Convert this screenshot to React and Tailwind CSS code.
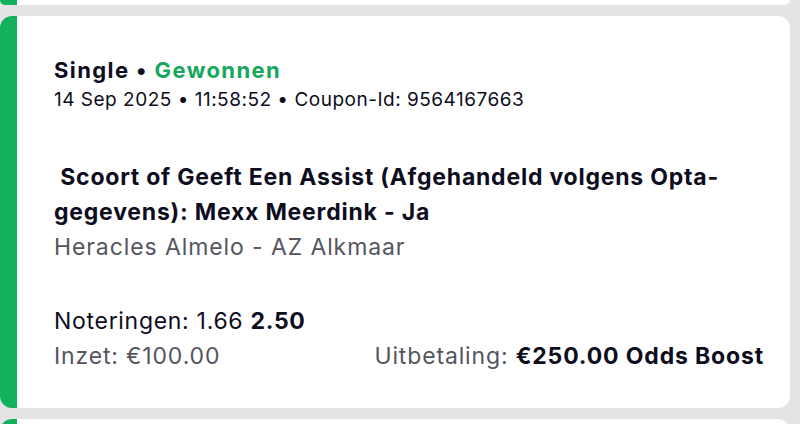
export default function App () {
  return (
    <div className="h-[424px] w-[800px] overflow-hidden bg-[#e4e4e7] flex flex-col gap-[11px] pr-[10px]" style={{ fontFamily: 'Inter, "Noto Sans", sans-serif' }}>
      <div className="h-[5px] shrink-0 bg-white border-l-[17px] border-[#12b05a] rounded-b-[12px]"></div>

      <div className="h-[392px] shrink-0 bg-white border-l-[17px] border-[#12b05a] rounded-[12px] pl-[37px] pr-[26px] pt-[41px] text-[#0d0d1e]">
        <div className="text-[22px] font-bold leading-[26px] tracking-[1.4px]">
          Single <span>•</span> <span className="text-[#17a75c]">Gewonnen</span>
        </div>
        <div className="mt-[4px] text-[19px] leading-[26px] tracking-[0.5px]">
          14 Sep 2025 • 11:58:52 • Coupon-Id: 9564167663
        </div>

        <div className="mt-[47px] w-[690px] text-[23px] font-bold leading-[35px] tracking-[0.78px]">
          &nbsp;Scoort of Geeft Een Assist (Afgehandeld volgens Opta-gegevens): Mexx Meerdink - Ja
        </div>
        <div className="text-[23px] leading-[34px] text-[#55555f] tracking-[0.9px]">
          Heracles Almelo - AZ Alkmaar
        </div>

        <div className="mt-[40px] text-[23px] leading-[35px] tracking-[0.7px]">
          Noteringen: 1.66 <span className="font-bold">2.50</span>
        </div>
        <div className="flex justify-between text-[23px] leading-[35px] tracking-[0.85px]">
          <span className="text-[#55555f]">Inzet: €100.00</span>
          <span className="text-[#55555f]">Uitbetaling: <span className="font-bold text-[#0d0d1e]">€250.00 Odds Boost</span></span>
        </div>
      </div>

      <div className="h-[20px] shrink-0 bg-white border-l-[17px] border-[#12b05a] rounded-t-[12px]"></div>
    </div>
  )
}
